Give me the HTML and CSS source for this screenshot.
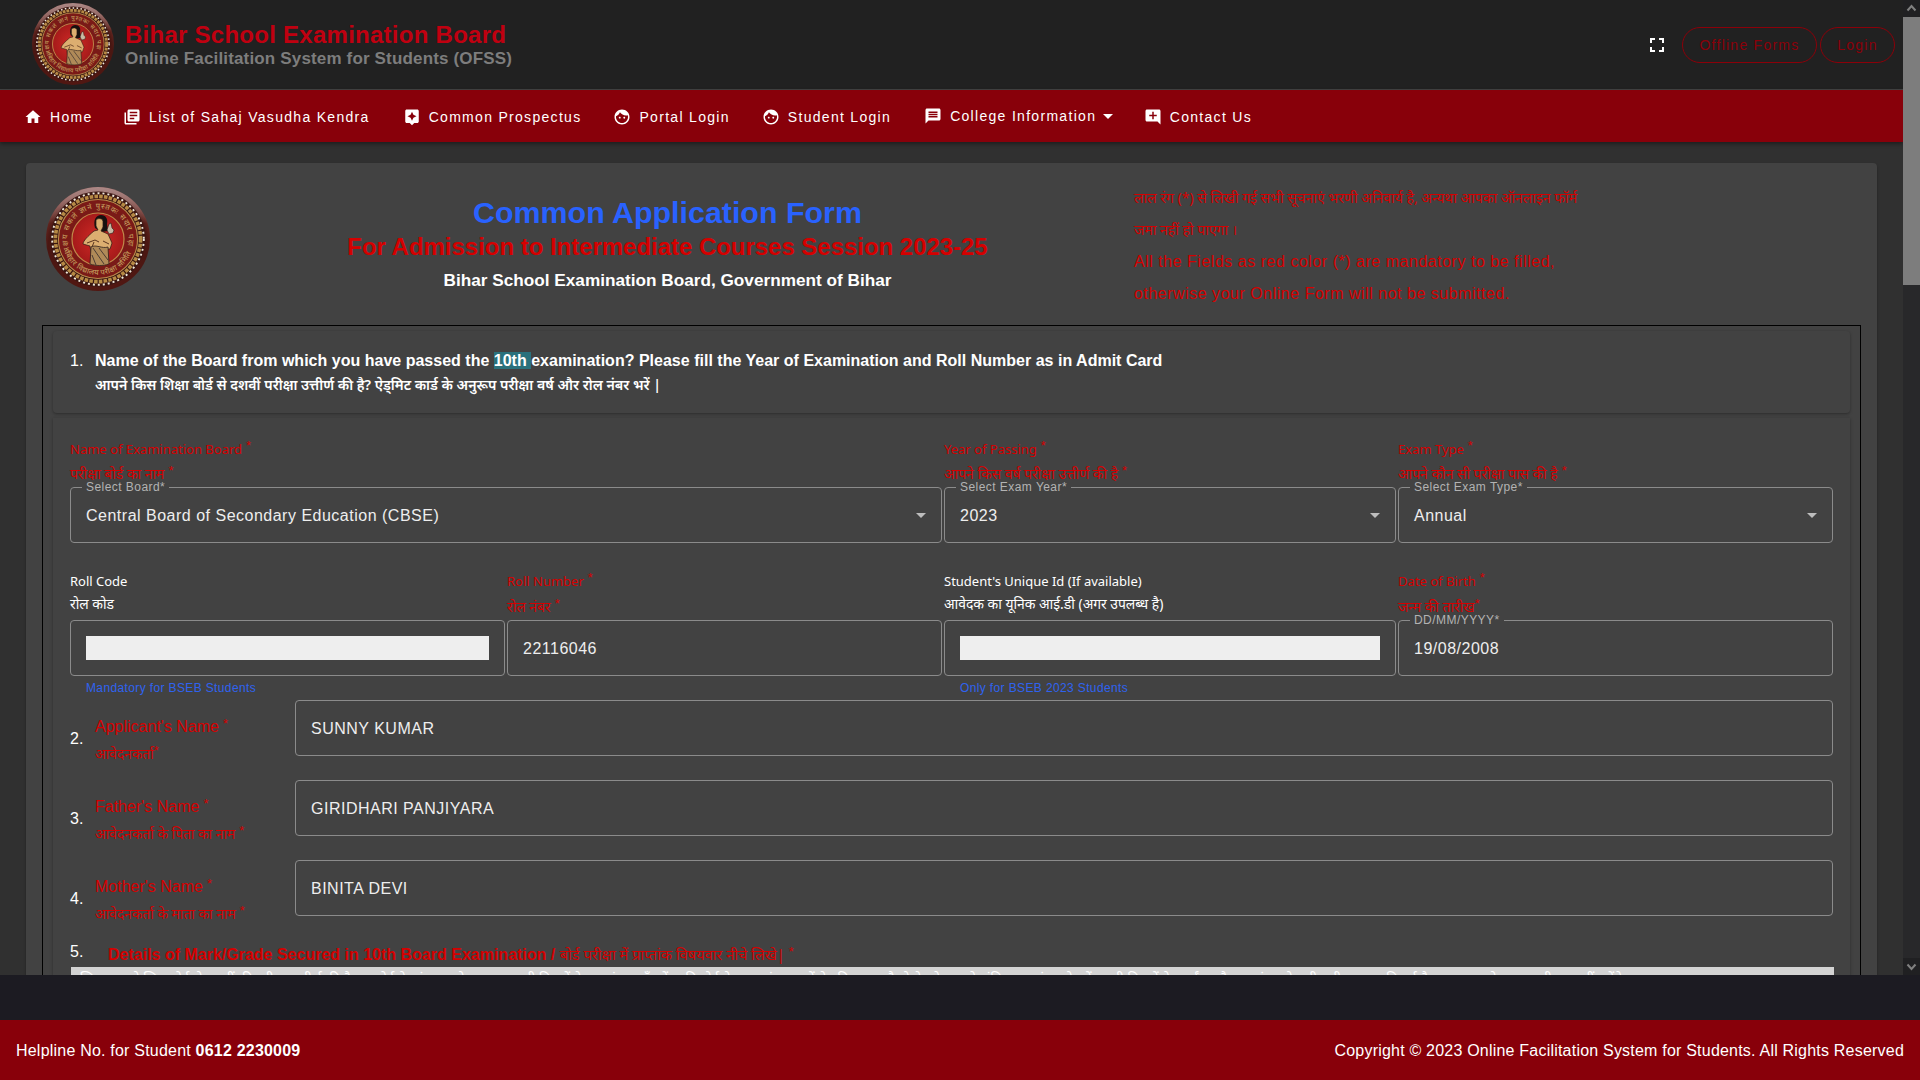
FILE: index.html
```html
<!DOCTYPE html>
<html lang="en">
<head>
<meta charset="utf-8">
<title>Bihar School Examination Board - OFSS</title>
<link rel="stylesheet" href="styles.css">
</head>
<body>
<svg width="0" height="0" class="defs" aria-hidden="true">
  <defs>
    <radialGradient id="rim" cx=".5" cy=".6" r=".56"><stop offset="0" stop-color="#6b1712"/><stop offset=".86" stop-color="#4a1712"/><stop offset="1" stop-color="#6a2a24"/></radialGradient>
    <linearGradient id="gloss" x1="0" y1="0" x2="0" y2="1"><stop offset="0" stop-color="#d8c8c8" stop-opacity=".6"/><stop offset=".35" stop-color="#fff" stop-opacity="0"/></linearGradient>
    <radialGradient id="core"><stop offset="0" stop-color="#d22a26"/><stop offset="1" stop-color="#a51a1a"/></radialGradient>
    <path id="arcTop" d="M24.300 65 A30.600 30.600 0 1 1 79.700 65"/>
    <path id="arcBottom" d="M17.500 62 A35.900 35.900 0 0 0 86.500 62"/>
    <symbol id="emblem" viewBox="0 0 104 104">
      <circle cx="52" cy="52" r="52" fill="url(#rim)"/>
      <circle cx="52" cy="52" r="52" fill="url(#gloss)"/>
      <circle cx="52" cy="52" r="47.500" fill="#3a1612"/>
      <circle cx="52" cy="52" r="45.800" fill="none" stroke="#f0e8dc" stroke-width="1.900" stroke-dasharray="2 3"/>
      <circle cx="52" cy="52" r="42.600" fill="none" stroke="#b68a45" stroke-width="3.600" stroke-dasharray="3.600 1.200"/>
      <circle cx="52" cy="52" r="39.500" fill="#7a1a17" stroke="#b98c4c" stroke-width="1.100"/>
      <text class="emblem-text"><textPath href="#arcTop" textLength="116">अक्षय सकलं ज्ञानं पुस्तकः सदार पढ़ा</textPath></text>
      <text class="emblem-text"><textPath href="#arcBottom" startOffset="4" textLength="84">बिहार विद्यालय परीक्षा समिति</textPath></text>
      <circle cx="52" cy="52" r="26" fill="url(#core)" stroke="#c0894a" stroke-width="1.200"/>
      <path d="M49 41C47 33 50 28 55 28C60 28 62 32 61 37L62 44L56 45Z" fill="#17100f"/>
      <path d="M50 33C52 31 56 31 57 34L57 40L55 44L62 47L66 56L64 62L60 62L60 66L45 66L44 59L37 57C37 54 42 49 48 44L52 43L50 39Z" fill="#dcae70" stroke="#2a1712" stroke-width=".7"/>
      <path d="M41 56L49 53L53 55M57 54L63 57M48 55L46 60" fill="none" stroke="#5a3520" stroke-width="1"/>
      <path d="M45 60C50 57 56 62 62 60L63 77C57 79 50 79 44 77Z" fill="#b08a58" stroke="#30201a" stroke-width=".8"/>
      <path d="M47 61L58 77M53 61L62 73M46 68L50 78" stroke="#4a3c34" stroke-width="1"/>
      <path d="M63 37L65 36L66 41L68 43L67 46L63 47L61 43Z" fill="#c8baa4" stroke="#2a1712" stroke-width=".6"/>
    </symbol>
  </defs>
</svg>

<div class="window">
  <div class="page">
    <header class="topbar">
      <svg class="topbar-logo" viewBox="0 0 104 104"><use href="#emblem"/></svg>
      <div class="brand">
        <div class="brand-name">Bihar School Examination Board</div>
        <div class="brand-sub">Online Facilitation System for Students (OFSS)</div>
      </div>
      <div class="actions">
        <svg class="fullscreen" viewBox="0 0 24 24"><path d="M7 14H5v5h5v-2H7v-3zm-2-4h2V7h3V5H5v5zm12 7h-3v2h5v-5h-2v3zM14 5v2h3v3h2V5h-5z"/></svg>
        <a class="pill pill-forms">Offline Forms</a>
        <a class="pill pill-login">Login</a>
      </div>
    </header>

    <nav class="nav">
      <a><svg viewBox="0 0 24 24"><path d="M10 20v-6h4v6h5v-8h3L12 3 2 12h3v8z"/></svg>Home</a>
      <a><svg viewBox="0 0 24 24"><path d="M4 6H2v14c0 1.100.9 2 2 2h14v-2H4V6zm16-4H8c-1.100 0-2 .9-2 2v12c0 1.100.9 2 2 2h12c1.100 0 2-.9 2-2V4c0-1.100-.9-2-2-2zm-1 9H9V9h10v2zm-4 4H9v-2h6v2zm4-8H9V5h10v2z"/></svg>List of Sahaj Vasudha Kendra</a>
      <a><svg viewBox="0 0 24 24"><path d="M19 2H5c-1.110 0-2 .9-2 2v14c0 1.100.89 2 2 2h4l3 3 3-3h4c1.100 0 2-.9 2-2V4c0-1.100-.9-2-2-2zm-5.120 10.880L12 17l-1.880-4.120L6 11l4.120-1.880L12 5l1.880 4.120L18 11l-4.120 1.880z"/></svg>Common Prospectus</a>
      <a><svg viewBox="0 0 24 24"><path d="M9 11.750c-.69 0-1.250.56-1.250 1.250s.56 1.250 1.250 1.250 1.250-.56 1.250-1.250-.56-1.250-1.250-1.250zm6 0c-.69 0-1.250.56-1.250 1.250s.56 1.250 1.250 1.250 1.250-.56 1.250-1.250-.56-1.250-1.250-1.250zM12 2C6.480 2 2 6.480 2 12s4.480 10 10 10 10-4.480 10-10S17.520 2 12 2zm0 18c-4.410 0-8-3.590-8-8 0-.29.02-.58.05-.86 2.360-1.050 4.230-2.980 5.210-5.370C11.070 8.330 14.050 10 17.420 10c.78 0 1.530-.09 2.250-.26.21.71.33 1.470.33 2.260 0 4.410-3.590 8-8 8z"/></svg>Portal Login</a>
      <a><svg viewBox="0 0 24 24"><path d="M9 11.750c-.69 0-1.250.56-1.250 1.250s.56 1.250 1.250 1.250 1.250-.56 1.250-1.250-.56-1.250-1.250-1.250zm6 0c-.69 0-1.250.56-1.250 1.250s.56 1.250 1.250 1.250 1.250-.56 1.250-1.250-.56-1.250-1.250-1.250zM12 2C6.480 2 2 6.480 2 12s4.480 10 10 10 10-4.480 10-10S17.520 2 12 2zm0 18c-4.410 0-8-3.590-8-8 0-.29.02-.58.05-.86 2.360-1.050 4.230-2.980 5.210-5.370C11.070 8.330 14.050 10 17.420 10c.78 0 1.530-.09 2.250-.26.21.71.33 1.470.33 2.260 0 4.410-3.590 8-8 8z"/></svg>Student Login</a>
      <a class="has-menu"><svg viewBox="0 0 24 24"><path d="M20 2H4c-1.100 0-2 .9-2 2v18l4-4h14c1.100 0 2-.9 2-2V4c0-1.100-.9-2-2-2zm-2 12H6v-2h12v2zm0-3H6V9h12v2zm0-3H6V6h12v2z"/></svg>College Information<i class="caret"></i></a>
      <a><svg viewBox="0 0 24 24"><path d="M22 4c0-1.100-.9-2-2-2H4c-1.100 0-2 .9-2 2v12c0 1.100.9 2 2 2h14l4 4V4zm-5 7h-4v4h-2v-4H7V9h4V5h2v4h4v2z"/></svg>Contact Us</a>
    </nav>

    <main class="card">
      <div class="card-head">
        <svg class="card-logo" viewBox="0 0 104 104"><use href="#emblem"/></svg>
        <div class="titles">
          <h1>Common Application Form</h1>
          <h2>For Admission to Intermediate Courses Session 2023-25</h2>
          <h3>Bihar School Examination Board, Government of Bihar</h3>
        </div>
        <div class="notice">
          <div class="hi">लाल रंग (*) से लिखी गई सभी सूचनाएं भरणी अनिवार्य है, अन्यथा आपका ऑनलाइन फॉर्म</div>
          <div class="hi">जमा नहीं हो पाएगा ।</div>
          <div>All the Fields as red color (*) are mandatory to be filled,</div>
          <div>otherwise your Online Form will not be submitted.</div>
        </div>
      </div>

      <div class="form">
        <section class="question">
          <span class="num">1.</span>
          <div>
            <div class="q-en">Name of the Board from which you have passed the <mark>10th </mark>examination? Please fill the Year of Examination and Roll Number as in Admit Card</div>
            <div class="q-hi">आपने किस शिक्षा बोर्ड से दशवीं परीक्षा उत्तीर्ण की है? ऐड्मिट कार्ड के अनुरूप परीक्षा वर्ष और रोल नंबर भरें |</div>
          </div>
        </section>

        <section class="panel">
          <div class="row row-exam">
            <div class="cell">
              <div class="lab red">Name of Examination Board<sup>*</sup></div>
              <div class="lab-hi red">परीक्षा बोर्ड का नाम<sup>*</sup></div>
              <div class="field"><span class="legend">Select Board*</span>Central Board of Secondary Education (CBSE)<i class="caret"></i></div>
            </div>
            <div class="cell">
              <div class="lab red">Year of Passing<sup>*</sup></div>
              <div class="lab-hi red">आपने किस वर्ष परीक्षा उत्तीर्ण की है<sup>*</sup></div>
              <div class="field"><span class="legend">Select Exam Year*</span>2023<i class="caret"></i></div>
            </div>
            <div class="cell">
              <div class="lab red">Exam Type<sup>*</sup></div>
              <div class="lab-hi red">आपने कौन सी परीक्षा पास की है<sup>*</sup></div>
              <div class="field"><span class="legend">Select Exam Type*</span>Annual<i class="caret"></i></div>
            </div>
          </div>

          <div class="row row-roll">
            <div class="cell">
              <div class="lab">Roll Code</div>
              <div class="lab-hi plain">रोल कोड</div>
              <div class="field"><span class="blank"></span></div>
              <div class="hint">Mandatory for BSEB Students</div>
            </div>
            <div class="cell">
              <div class="lab red">Roll Number<sup>*</sup></div>
              <div class="lab-hi red">रोल नंबर<sup>*</sup></div>
              <div class="field">22116046</div>
            </div>
            <div class="cell">
              <div class="lab">Student's Unique Id (If available)</div>
              <div class="lab-hi plain">आवेदक का यूनिक आई.डी (अगर उपलब्ध है)</div>
              <div class="field"><span class="blank"></span></div>
              <div class="hint">Only for BSEB 2023 Students</div>
            </div>
            <div class="cell">
              <div class="lab red">Date of Birth<sup>*</sup></div>
              <div class="lab-hi red">जन्म की तारीख<sup class="tight">*</sup></div>
              <div class="field"><span class="legend">DD/MM/YYYY*</span>19/08/2008</div>
            </div>
          </div>

          <div class="person">
            <span class="num">2.</span>
            <div class="who"><div>Applicant's Name<sup>*</sup></div><div class="hi">आवेदनकर्ता<sup class="tight">*</sup></div></div>
            <div class="field">SUNNY KUMAR</div>
          </div>
          <div class="person">
            <span class="num">3.</span>
            <div class="who"><div>Father's Name<sup>*</sup></div><div class="hi">आवेदनकर्ता के पिता का नाम<sup>*</sup></div></div>
            <div class="field">GIRIDHARI PANJIYARA</div>
          </div>
          <div class="person">
            <span class="num">4.</span>
            <div class="who"><div>Mother's Name<sup>*</sup></div><div class="hi">आवेदनकर्ता के माता का नाम<sup>*</sup></div></div>
            <div class="field">BINITA DEVI</div>
          </div>

          <div class="marks">
            <span class="num">5.</span>
            <div class="marks-title"><b>Details of Mark/Grade Secured in 10th Board Examination /</b> <span class="marks-hi">बोर्ड परीक्षा में प्राप्तांक विषयवार नीचे लिखे|</span><sup>*</sup></div>
          </div>
          <div class="strip">जिस छात्र ने जिस बोर्ड से दसवीं की परीक्षा उत्तीर्ण की है उस बोर्ड के अंक पत्र के अनुसार सभी विषयों के प्राप्तांक यहाँ भरें। यदि बोर्ड के द्वारा अंक पत्र में ग्रेड दिया गया है तो ग्रेड के सामने अंकित प्राप्तांक को भरें। सभी विषयों के पूर्णांक और प्राप्तांक को सही सही भरना अनिवार्य है, अन्यथा आवेदन पत्र स्वीकार नहीं करेंगे।</div>
        </section>
      </div>
    </main>
  </div>

  <div class="scrollbar">
    <div class="sb-button"><svg viewBox="0 0 17 17"><path d="M4.500 10.500l4-4.500 4 4.500"/></svg></div>
    <div class="sb-thumb"></div>
    <div class="sb-track"></div>
    <div class="sb-button"><svg viewBox="0 0 17 17"><path d="M4.500 6.500l4 4.500 4-4.500"/></svg></div>
  </div>
</div>

<div class="gap"></div>
<footer class="footer">
  <span>Helpline No. for Student <b>0612 2230009</b></span>
  <span>Copyright © 2023 Online Facilitation System for Students. All Rights Reserved</span>
</footer>
</body>
</html>
```
FILE: styles.css
```css
* { box-sizing: border-box; }

body {
  margin: 0;
  height: 1080px;
  display: flex;
  flex-direction: column;
  overflow: hidden;
  background: #1c1b22;
  color: #fff;
  font: 16px/24px "Liberation Sans", "Noto Sans", sans-serif;
  white-space: nowrap;
}

.defs { position: absolute; }
.emblem-text { font: 500 7.5px "Noto Sans", sans-serif; fill: #c29a5c; }

.window { display: flex; height: 975px; }
.page { flex: 1; min-width: 0; overflow: hidden; background: #303030; }

/* header */
.topbar {
  display: flex;
  height: 90px;
  padding: 0 8px 0 32px;
  background: #212121;
  border-bottom: 1px solid #424242;
}
.topbar-logo { width: 82px; height: 82px; margin-top: 3px; }
.brand { flex: 1; padding: 21px 0 0 11px; font-weight: bold; }
.brand-name { font-size: 24px; line-height: 28px; letter-spacing: .26px; color: #c00010; }
.brand-sub { font-size: 17px; line-height: 20px; letter-spacing: .16px; color: #7d7d7d; }
.actions { display: flex; align-items: center; height: 90px; gap: 3px; }
.fullscreen { width: 24px; height: 24px; margin-right: 10px; fill: #fff; }
.pill {
  height: 36px;
  border: 1px solid #8b0009;
  border-radius: 18px;
  color: #8b0009;
  font-size: 14px;
  line-height: 34px;
  letter-spacing: 1.25px;
  text-align: center;
}
.pill-forms { width: 135px; }
.pill-login { width: 75px; }

.nav {
  position: relative;
  display: flex;
  height: 52px;
  padding-left: 8px;
  background: #88000a;
  box-shadow: 0 2px 4px rgba(0, 0, 0, .4);
}
.nav a {
  display: flex;
  align-items: center;
  padding: 2px 16px 0;
  font-size: 14px;
  letter-spacing: 1.3px;
}
.nav a:first-child { padding-right: 14.5px; }
.nav a:nth-child(2) { padding-right: 17px; }
.nav svg { width: 18px; height: 18px; margin-right: 8px; fill: #fff; }
.nav .has-menu { padding-top: 0; padding-left: 17px; padding-right: 15.5px; }

.caret {
  border: 5px solid transparent;
  border-top-color: #fff;
  border-bottom: 0;
}
.nav .caret { margin-left: 7px; margin-right: -1px; }

/* application card */
.card {
  height: 1400px;
  margin: 21px 26px 0;
  padding: 0 16px;
  border-radius: 4px;
  background: #424242;
  box-shadow: 0 2px 3px rgba(0, 0, 0, .3);
}
.card-head { display: grid; grid-template-columns: 159px 933px 1fr; height: 162px; }
.card-logo { width: 104px; height: 104px; margin: 24px 0 0 4px; }
.titles { padding-top: 27px; text-align: center; }
.titles h1, .titles h2, .titles h3 { margin: 0; }
.titles h1 { font-size: 30.4px; line-height: 44px; color: #2962ff; }
.titles h2 { padding-top: 1px; font-size: 24px; line-height: 24px; letter-spacing: -.03px; color: #d50000; }
.titles h3 { font-size: 17.2px; line-height: 42px; }
.notice { padding-top: 19px; letter-spacing: .52px; line-height: 32px; color: #d50000; }
.notice .hi { font: 14px/32px "Noto Sans", sans-serif; letter-spacing: 0; }

.form { height: 1200px; padding: 5px 10px; border: 1px solid #000; }
.question {
  display: flex;
  height: 82px;
  padding: 18px 0 0 17px;
  border-radius: 4px;
  box-shadow: 0 1px 3px rgba(0, 0, 0, .35);
}
.num { flex: none; width: 25px; }
.q-en { font-weight: bold; letter-spacing: .01px; }
mark { padding: 0; background: #2a717c; color: #fff; }
.q-hi { font: 600 14.1px/24px "Noto Sans", sans-serif; }

.panel { height: 1100px; margin-top: 5px; padding: 19px 17px 0; box-shadow: 0 1px 3px rgba(0, 0, 0, .35); }
.row { display: grid; gap: 2px; }
.row-exam { grid-template-columns: 872px 452px 435px; }
.row-roll { grid-template-columns: 435px 435px 452px 435px; padding-top: 26px; height: 157px; }
.lab { font: 13px/24px "Noto Sans", sans-serif; }
.lab-hi { font: 13.9px/26px "Noto Sans", sans-serif; }
.row-roll .lab-hi { line-height: 27px; }
.row-roll .lab-hi.plain { line-height: 21px; margin-bottom: 6px; }
.red { color: #d50000; }
sup { margin-left: 4px; font: 13px/0 "Liberation Sans", sans-serif; vertical-align: 4px; }
sup.tight { margin-left: 0; }

.field {
  position: relative;
  display: flex;
  align-items: center;
  justify-content: space-between;
  height: 56px;
  padding: 1px 15px 0;
  border: 1px solid #8b8b8b;
  border-radius: 4px;
  letter-spacing: .5px;
  color: #eee;
}
.field .caret { border-top-color: #bdbdbd; }
.legend {
  position: absolute;
  left: 11px;
  top: -7px;
  padding: 0 4px;
  font-size: 12px;
  line-height: 12px;
  letter-spacing: .45px;
  color: #b3b3b3;
  background: linear-gradient(transparent 5px, #424242 5px);
}
.blank { flex: 1; height: 24px; margin-top: -1px; background: #eee; }
.hint { padding-left: 16px; font-size: 12px; letter-spacing: .37px; color: #2f62f0; }

.person { display: grid; grid-template-columns: 25px 200px 1538px; height: 80px; }
.person .num { padding-top: 27px; }
.who { padding-top: 14px; line-height: 26px; color: #d50000; }
.who .hi { font: 13.8px/27px "Noto Sans", sans-serif; }

.marks { display: flex; height: 27px; }
.marks-title { padding-left: 13px; line-height: 29px; color: #d50000; }
.marks-hi { font: 14.6px/20px "Noto Sans", sans-serif; }
.strip {
  height: 40px;
  margin: 0 -1px 0 1px;
  padding: 0 9px;
  overflow: hidden;
  background: #d3d3d3;
  font: 14px/24px "Noto Sans", sans-serif;
}

/* window chrome and footer */
.scrollbar { display: flex; flex-direction: column; width: 17px; background: #28282a; }
.sb-button { height: 17px; background: #202022; }
.sb-button svg { display: block; width: 17px; height: 17px; fill: none; stroke: #808080; stroke-width: 2; }
.sb-thumb { height: 268px; background: #7d7d7d; }
.sb-track { flex: 1; }
.gap { height: 45px; }
.footer {
  display: flex;
  justify-content: space-between;
  align-items: center;
  height: 60px;
  padding: 1px 16px 0;
  background: #88000a;
  letter-spacing: .21px;
}
```
